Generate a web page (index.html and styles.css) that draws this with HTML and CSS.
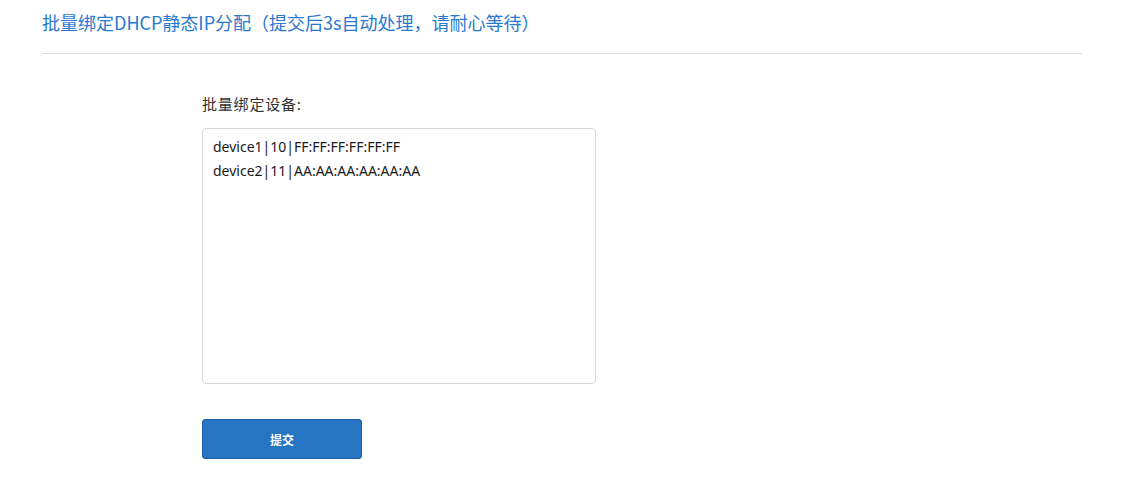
FILE: index.html
```html
<!DOCTYPE html>
<html lang="zh-CN">
<head>
<meta charset="utf-8">
<title>批量绑定DHCP静态IP分配</title>
<link rel="stylesheet" href="styles.css">
</head>
<body>
<div class="page">
  <div class="header">
    <h1 class="title">批量绑定DHCP静态IP分配（提交后3s自动处理，请耐心等待）</h1>
  </div>
  <form class="form">
    <label class="label" for="devices">批量绑定设备:</label>
    <textarea id="devices" class="textarea">device1|10|FF:FF:FF:FF:FF:FF
device2|11|AA:AA:AA:AA:AA:AA</textarea>
    <button type="button" class="btn">提交</button>
  </form>
</div>
</body>
</html>
```

FILE: styles.css
```css
html, body {
  margin: 0;
  padding: 0;
  background: #fff;
}
body {
  font-family: "Noto Sans CJK SC", "Noto Sans", sans-serif;
  color: #333;
}
.page {
  padding: 0 46px 0 42px;
}
.header {
  padding-top: 9px;
  padding-bottom: 18px;
  border-bottom: 1px solid #dddddd;
}
.title {
  margin: 0;
  font-size: 18px;
  line-height: 26px;
  font-weight: normal;
  color: #2a78cf;
}
.form {
  display: flex;
  flex-direction: column;
  align-items: flex-start;
  padding-left: 160px;
  padding-top: 39px;
}
.label {
  font-size: 15px;
  letter-spacing: 0.8px;
  line-height: 22px;
  color: #333;
}
.textarea {
  margin-top: 13px;
  box-sizing: border-box;
  width: 394px;
  height: 256px;
  border: 1px solid #d9d9d9;
  border-radius: 4px;
  padding: 6px 10px;
  font-family: "Noto Sans", "Noto Sans CJK SC", sans-serif;
  font-size: 14px;
  line-height: 24px;
  color: #1a1a1a;
  resize: none;
  outline: none;
}
.btn {
  margin-top: 35px;
  width: 160px;
  height: 40px;
  box-sizing: border-box;
  background: #2775c2;
  border: 1px solid #1b5fa6;
  border-radius: 3px;
  color: #fff;
  font-family: "Noto Sans CJK SC", sans-serif;
  font-size: 12px;
  font-weight: bold;
  cursor: pointer;
}
```
